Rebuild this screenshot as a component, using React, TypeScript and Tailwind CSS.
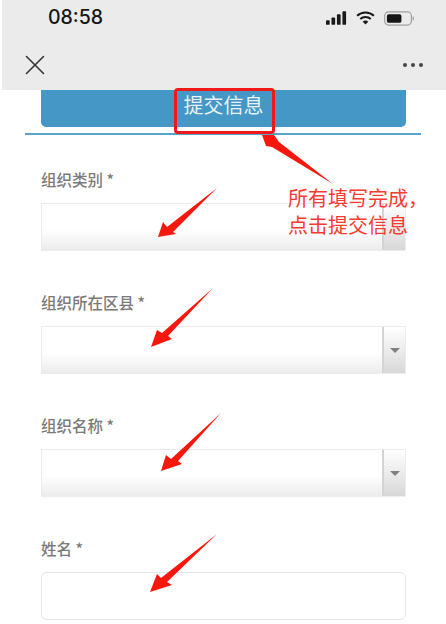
import { X } from "lucide-react";

const cjk = { fontFamily: '"Noto Sans CJK SC", sans-serif' };

const arrows = [
  "217,188 173,232 176,234 158,237 163,222 167,227",
  "213,288 168,336 172,339 151,347 157,330 162,333",
  "221,413 178,461 182,464 161,471 166,455 171,459",
  "217,534 167,582 172,585 150,592 157,574 161,578",
  "333,184 272,147 266,146 262,135 274,135 279,142",
];

function Field({ label, select, hideCaret }: { label: string; select?: boolean; hideCaret?: boolean }) {
  return (
    <div className="flex flex-col gap-[15px]">
      <div className="h-[20px] pt-[1px] text-[15.5px] leading-[20px] font-medium text-[#7a7a7a]">
        {label} *
      </div>
      {select ? (
        <div className="flex h-[48px] border border-[#ececec] bg-gradient-to-b from-white from-55% to-[#ececec]">
          <div className="flex-1" />
          <div className="flex w-[23px] items-center justify-center border-l-2 border-[#d4d4d4] bg-gradient-to-b from-white to-[#d8d8d8]">
            {!hideCaret && (
              <div className="h-0 w-0 border-x-[5px] border-t-[5px] border-x-transparent border-t-[#808080]" />
            )}
          </div>
        </div>
      ) : (
        <div className="h-[48px] rounded-[6px] border border-[#e6e6e6] bg-white" />
      )}
    </div>
  );
}

export default function App() {
  return (
    <div className="relative h-[624px] w-[446px] overflow-hidden bg-white" style={cjk}>
      <div className="ml-[2px] h-[90px] bg-[#ebebeb] px-[24px] pt-[5px]">
        <div className="flex h-[26px] items-center justify-between pl-[22px] pr-[8px]">
          <span className="text-[19.5px] font-medium text-[#161616]" style={{ fontFamily: '"Inter", sans-serif' }}>
            08:58
          </span>
          <div className="flex items-center gap-[9px]">
            <svg width="21" height="14" viewBox="0 0 23 15" fill="#1a1a1a">
              <rect x="0" y="10" width="4" height="5" rx="1" />
              <rect x="6" y="7" width="4" height="8" rx="1" />
              <rect x="12" y="3.5" width="4" height="11.5" rx="1" />
              <rect x="18" y="0" width="4" height="15" rx="1" />
            </svg>
            <svg width="19" height="14" viewBox="0 0 20 15" fill="none" stroke="#1a1a1a" strokeWidth="2.2">
              <path d="M1 5.2a13 13 0 0 1 18 0" />
              <path d="M4.4 8.6a8.2 8.2 0 0 1 11.2 0" />
              <path d="M10 14.5 7 11.4a4.2 4.2 0 0 1 6 0z" fill="#1a1a1a" stroke="none" />
            </svg>
            <svg width="30" height="15" viewBox="0 0 31 15">
              <rect x="0.7" y="0.7" width="27.6" height="13.6" rx="4" fill="none" stroke="#a0a0a0" strokeWidth="1.2" />
              <rect x="3" y="3" width="15" height="9" rx="2" fill="#161616" />
              <rect x="29.5" y="5.5" width="1.3" height="4" rx="0.6" fill="#a0a0a0" />
            </svg>
          </div>
        </div>
        <div className="mt-[19px] flex h-[30px] items-center justify-between">
          <X size={34} strokeWidth={1.1} className="-ml-[8px] shrink-0 text-[#333333]" />
          <div className="mr-[-1px] flex gap-[4px]">
            <span className="h-[4px] w-[4px] rounded-full bg-[#444444]" />
            <span className="h-[4px] w-[4px] rounded-full bg-[#444444]" />
            <span className="h-[4px] w-[4px] rounded-full bg-[#444444]" />
          </div>
        </div>
      </div>

      <div className="ml-[41px] flex h-[37px] w-[365px] items-center justify-center rounded-b-[5px] bg-[#4597c6] pb-[7px] text-[20px] text-[#e8f2f8]">
        提交信息
      </div>
      <div className="mx-[25px] mt-[6px] h-[2px] bg-[#5ba3cc]" />

      <div className="ml-[41px] mt-[33px] flex w-[365px] flex-col gap-[40px]">
        <Field label="组织类别" select hideCaret />
        <Field label="组织所在区县" select />
        <Field label="组织名称" select />
        <Field label="姓名" />
      </div>

      <div className="absolute left-[174px] top-[88px] h-[46px] w-[101px] rounded-[4px] border-[3px] border-[#f01818]" />
      <div className="absolute left-[288px] top-[184px] whitespace-nowrap text-[20px] leading-[27px] font-normal text-[#f83a30]">
        所有填写完成，
        <br />
        点击提交信息
      </div>
      <svg className="absolute left-0 top-0" width="446" height="624" viewBox="0 0 446 624" fill="#f8170d">
        {arrows.map((points) => (
          <polygon key={points} points={points} />
        ))}
      </svg>
    </div>
  );
}
